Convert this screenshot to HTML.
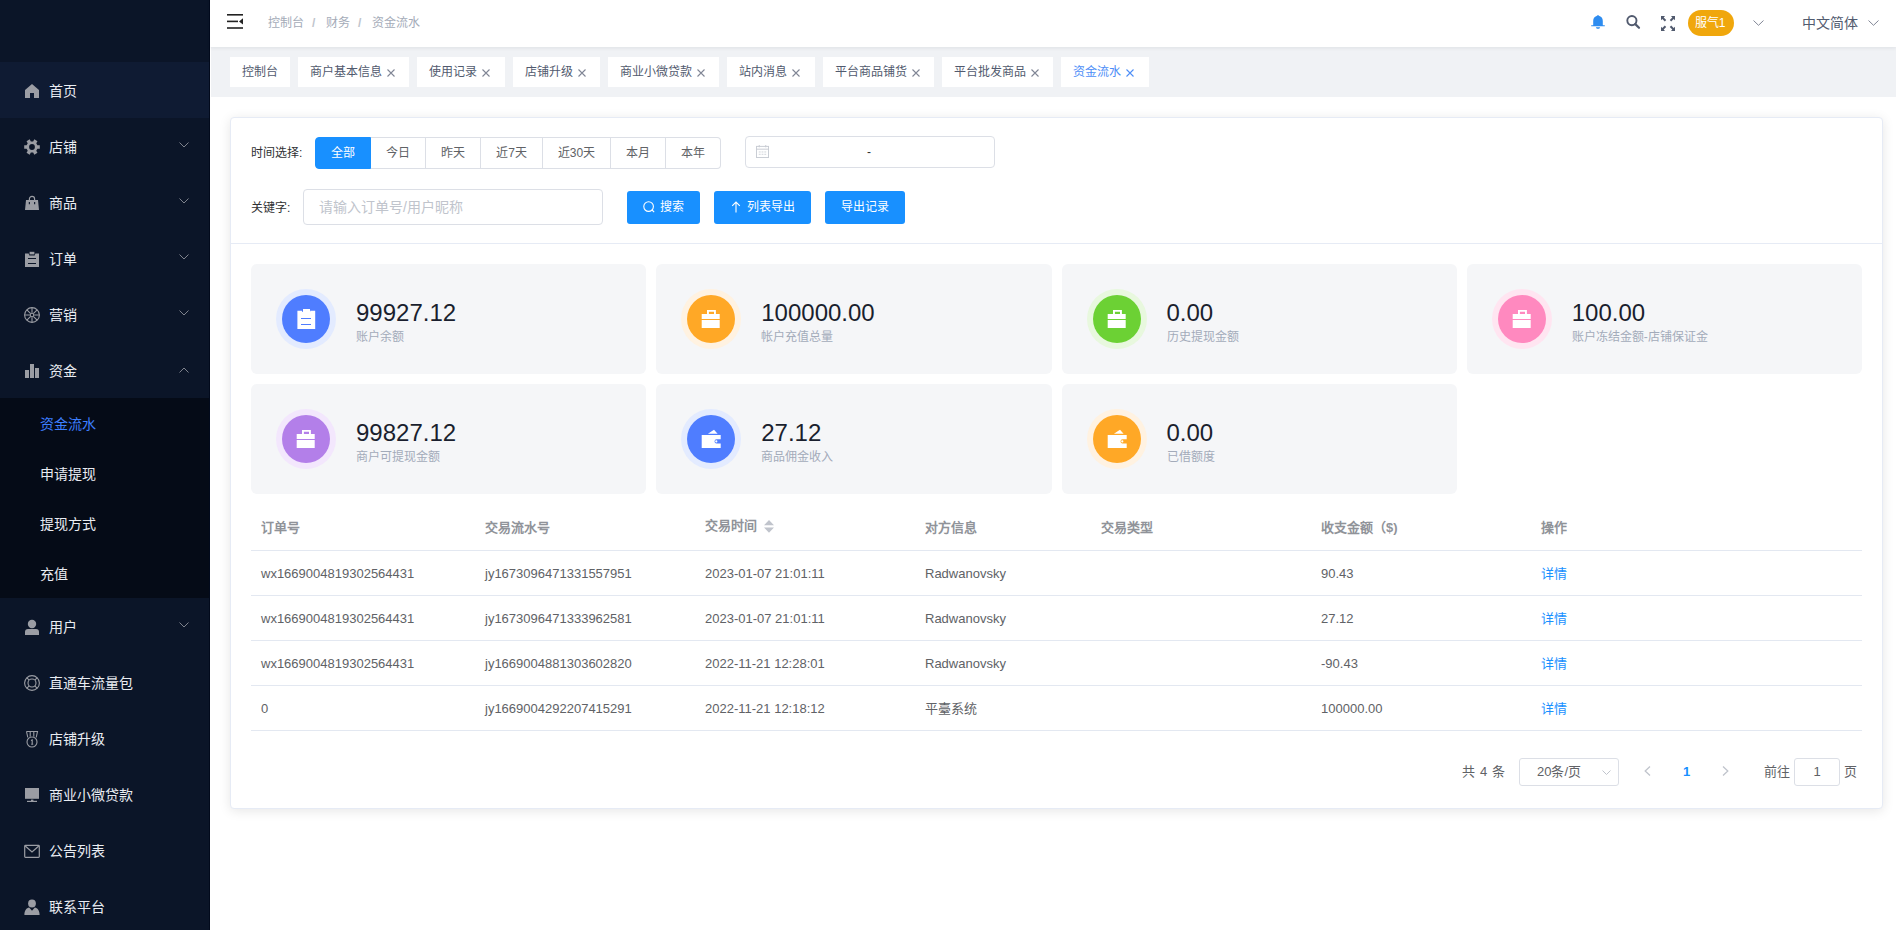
<!DOCTYPE html>
<html lang="zh-CN">
<head>
<meta charset="utf-8">
<title>资金流水</title>
<style>
*{box-sizing:border-box;margin:0;padding:0}
html,body{width:1896px;height:930px;overflow:hidden;background:#fff;font-family:"Liberation Sans",sans-serif;}
.a{position:absolute;white-space:nowrap}
#side{position:absolute;left:0;top:0;width:210px;height:930px;background:#0b1528;border-right:1px solid #020a1c;overflow:hidden}
.mi{position:absolute;left:0;width:209px;height:56px;color:#e9ecf2;font-size:14px;line-height:56px}
.mi .t{position:absolute;left:49px;top:1px}
.mi svg.ic{position:absolute;left:24px;top:18px;width:16px;height:20px;fill:#9b9da4}
.mi svg.ch{position:absolute;left:179px;top:24px;width:10px;height:6px;fill:none;stroke:#7f838d;stroke-width:1}
.hl{background:#0f1b33}
#sub{position:absolute;left:0;top:398px;width:209px;height:200px;background:#050b17}
.si{position:absolute;left:40px;width:160px;height:50px;line-height:52px;font-size:14px;color:#e9ecf2}
#hdr{position:absolute;left:210px;top:0;width:1686px;height:47px;background:#fff;z-index:2;box-shadow:0 1px 4px rgba(0,21,41,.08)}
#tabs{position:absolute;left:211px;top:47px;width:1685px;height:50px;background:#f0f2f5}
.tab{position:absolute;top:10px;height:30px;background:#fff;font-size:12px;line-height:30px;color:#515a6e;white-space:nowrap}
.tab span{position:absolute;left:12px;top:0}
.tab svg{position:absolute;top:12px;width:8px;height:8px;stroke:#808695;stroke-width:1.1;fill:none}

.bc{position:absolute;top:0;height:47px;line-height:47px;font-size:12px;color:#a4abb8}
.bcs{position:absolute;top:0;height:47px;line-height:47px;font-size:12px;color:#c0c4cc;font-weight:bold}
#card{position:absolute;left:230px;top:117px;width:1653px;height:692px;background:#fff;border:1px solid #e6ebf5;border-radius:4px;box-shadow:0 2px 12px 0 rgba(0,0,0,.1)}
.lbl{position:absolute;font-size:12px;color:#303133;line-height:16px}
.rb{position:absolute;top:19px;height:32px;border:1px solid #dcdfe6;border-left:none;font-size:12px;line-height:30px;color:#606266;text-align:center;background:#fff}
.btn{position:absolute;top:73px;height:33px;background:#1890ff;border-radius:3px;color:#fff;font-size:12px;line-height:32px}
.sc{position:absolute;width:395.25px;height:110px;background:#f5f6f8;border-radius:6px}
.ring{position:absolute;left:25px;top:25px;width:60px;height:60px;border-radius:50%}
.dot{position:absolute;left:6px;top:6px;width:48px;height:48px;border-radius:50%}
.dot svg{position:absolute;left:0;top:0;width:48px;height:48px;fill:#fff}
.num{position:absolute;left:105px;top:35px;font-size:24px;line-height:28px;color:#1a1f2e}
.sl{position:absolute;left:105px;top:65px;font-size:12px;line-height:16px;color:#a3abba}
.th{position:absolute;top:388px;height:44px;line-height:44px;font-size:13px;font-weight:bold;color:#909399}
.td{position:absolute;height:44px;line-height:46px;font-size:13px;color:#606266}
.rl{position:absolute;left:251px;width:1611px;height:1px;background:#e3e8f1}
.pg{position:absolute;font-size:13px;color:#606266;line-height:28px;top:640px}
</style>
</head>
<body>
<div id="side">
  <div class="mi hl" style="top:62px"><svg class="ic" viewBox="0 0 16 20"><path d="M8 4 L15 10 V18 H10 V13 H6 V18 H1 V10 Z"/></svg><span class="t">首页</span></div>
  <div class="mi" style="top:118px"><svg class="ic" viewBox="0 0 16 20"><path fill-rule="evenodd" d="M13.41 9.20 L15.79 9.20 L15.79 12.80 L13.41 12.80 L12.26 14.78 L13.46 16.85 L10.34 18.65 L9.15 16.58 L6.85 16.58 L5.66 18.65 L2.54 16.85 L3.74 14.78 L2.59 12.80 L0.21 12.80 L0.21 9.20 L2.59 9.20 L3.74 7.22 L2.54 5.15 L5.66 3.35 L6.85 5.42 L9.15 5.42 L10.34 3.35 L13.46 5.15 L12.26 7.22 Z M10.9 11 A2.9 2.9 0 1 0 5.1 11 A2.9 2.9 0 1 0 10.9 11 Z"/></svg><span class="t">店铺</span><svg class="ch" viewBox="0 0 10 6"><path d="M0.5 0.5 L5 5 L9.5 0.5"/></svg></div>
  <div class="mi" style="top:174px"><svg class="ic" viewBox="0 0 16 20"><path fill-rule="evenodd" d="M2 8 H14 L15 18 H1 Z M4.8 10 V12.2 H5.9 V10 Z M10.1 10 V12.2 H11.2 V10 Z"/><path d="M5.4 8.2 V7 A2.6 2.6 0 0 1 10.6 7 V8.2" fill="none" stroke="#9b9da4" stroke-width="1.2"/></svg><span class="t">商品</span><svg class="ch" viewBox="0 0 10 6"><path d="M0.5 0.5 L5 5 L9.5 0.5"/></svg></div>
  <div class="mi" style="top:230px"><svg class="ic" viewBox="0 0 16 20"><path fill-rule="evenodd" d="M1 5.5 H4.6 L5.4 7.6 H10.6 L11.4 5.5 H15 V19 H1 Z M4 10 V11 H12 V10 Z M4 15 V16 H12 V15 Z"/><rect x="5.6" y="3.8" width="4.8" height="2.6"/></svg><span class="t">订单</span><svg class="ch" viewBox="0 0 10 6"><path d="M0.5 0.5 L5 5 L9.5 0.5"/></svg></div>
  <div class="mi" style="top:286px"><svg class="ic" viewBox="0 0 16 20" style="fill:none;stroke:#9b9da4;stroke-width:1.1"><circle cx="8" cy="11" r="7.4"/><circle cx="8" cy="11" r="1.8"/><path d="M10.20 11.00L15.30 11.00M9.56 12.56L13.16 16.16M8.00 13.20L8.00 18.30M6.44 12.56L2.84 16.16M5.80 11.00L0.70 11.00M6.44 9.44L2.84 5.84M8.00 8.80L8.00 3.70M9.56 9.44L13.16 5.84"/></svg><span class="t">营销</span><svg class="ch" viewBox="0 0 10 6"><path d="M0.5 0.5 L5 5 L9.5 0.5"/></svg></div>
  <div class="mi" style="top:342px"><svg class="ic" viewBox="0 0 16 20"><rect x="1" y="10" width="4" height="8"/><rect x="6" y="4" width="4" height="14"/><rect x="11" y="8" width="4" height="10"/></svg><span class="t">资金</span><svg class="ch" viewBox="0 0 10 6" style="top:25px"><path d="M0.5 5.5 L5 1 L9.5 5.5"/></svg></div>
  <div id="sub">
    <div class="si" style="top:0;color:#3d7fff">资金流水</div>
    <div class="si" style="top:50px">申请提现</div>
    <div class="si" style="top:100px">提现方式</div>
    <div class="si" style="top:150px">充值</div>
  </div>
  <div class="mi" style="top:598px"><svg class="ic" viewBox="0 0 16 20"><circle cx="8" cy="8" r="4.2"/><path d="M1 19 V16 A3 3 0 0 1 4 13 H12 A3 3 0 0 1 15 16 V19 Z"/></svg><span class="t">用户</span><svg class="ch" viewBox="0 0 10 6"><path d="M0.5 0.5 L5 5 L9.5 0.5"/></svg></div>
  <div class="mi" style="top:654px"><svg class="ic" viewBox="0 0 16 20" style="fill:none;stroke:#9b9da4;stroke-width:1.1"><circle cx="8" cy="11" r="7.4"/><circle cx="8" cy="11" r="4"/><path d="M10.83 13.83L13.30 16.30M5.17 13.83L2.70 16.30M5.17 8.17L2.70 5.70M10.83 8.17L13.30 5.70"/></svg><span class="t">直通车流量包</span></div>
  <div class="mi" style="top:710px"><svg class="ic" viewBox="0 0 16 20" style="fill:none;stroke:#9b9da4;stroke-width:1.1"><path d="M2.5 3.5 H13.5 L12.2 9.5 M2.5 3.5 L3.8 9.5 M6.2 4 V8.8 M9.8 4 V8.8"/><circle cx="8" cy="14" r="5"/><path d="M7 12.6 L8.2 12 V16.3 M7.2 16.3 H9.2"/></svg><span class="t">店铺升级</span></div>
  <div class="mi" style="top:766px"><svg class="ic" viewBox="0 0 16 20"><rect x="1" y="4" width="14" height="10.8"/><rect x="7" y="15.6" width="2.4" height="1.4"/><rect x="3" y="16.8" width="10" height="1.2"/></svg><span class="t">商业小微贷款</span></div>
  <div class="mi" style="top:822px"><svg class="ic" viewBox="0 0 16 20" style="fill:none;stroke:#9b9da4;stroke-width:1.2"><rect x="0.7" y="5.4" width="14.6" height="12" rx="0.8"/><path d="M1.2 6 L8 12 L14.8 6"/></svg><span class="t">公告列表</span></div>
  <div class="mi" style="top:878px"><svg class="ic" viewBox="0 0 16 20"><circle cx="8" cy="7.5" r="3.9"/><path d="M0.4 19 C0.4 14.5 2.5 12 5.2 11.6 L8 14.8 L10.8 11.6 C13.5 12 15.6 14.5 15.6 19 Z"/></svg><span class="t">联系平台</span></div>
</div>

<div id="hdr">
  <svg class="a" style="left:17px;top:14px" width="16" height="15" viewBox="0 0 16 15"><rect x="0" y="0" width="16" height="1.6" fill="#222"/><rect x="0" y="6.6" width="11" height="1.6" fill="#222"/><rect x="0" y="13.2" width="16" height="1.6" fill="#222"/><path d="M16 4.2 L12 7.4 L16 10.6 Z" fill="#222"/></svg>
  <span class="bc" style="left:58px">控制台</span>
  <span class="bcs" style="left:102px">/</span>
  <span class="bc" style="left:116px">财务</span>
  <span class="bcs" style="left:148px">/</span>
  <span class="bc" style="left:162px">资金流水</span>
  <svg class="a" style="left:1381px;top:15px" width="14" height="14" viewBox="0 0 14 14"><path d="M7 0 L5.6 0.9 C3.4 1.6 2.2 3.4 2.2 6 V10.2 H0.2 V11.3 H13.8 V10.2 H11.8 V6 C11.8 3.4 10.6 1.6 8.4 0.9 Z M4.8 12.3 H9.2 L8.2 13.8 H5.8 Z" fill="#2d8cf0"/></svg>
  <svg class="a" style="left:1416px;top:15px" width="15" height="15" viewBox="0 0 15 15"><circle cx="5.9" cy="5.6" r="4.6" fill="none" stroke="#515a6e" stroke-width="1.9"/><path d="M9.3 9.1 L13 12.8" stroke="#515a6e" stroke-width="2.2" stroke-linecap="round"/></svg>
  <svg class="a" style="left:1451px;top:16px" width="14" height="15" viewBox="0 0 15 15" preserveAspectRatio="none" fill="#515a6e"><path d="M0 0 H4.3 L2.9 1.4 L5.6 4.1 L4.1 5.6 L1.4 2.9 L0 4.3 Z"/><path d="M15 0 V4.3 L13.6 2.9 L10.9 5.6 L9.4 4.1 L12.1 1.4 L10.7 0 Z"/><path d="M0 15 V10.7 L1.4 12.1 L4.1 9.4 L5.6 10.9 L2.9 13.6 L4.3 15 Z"/><path d="M15 15 H10.7 L12.1 13.6 L9.4 10.9 L10.9 9.4 L13.6 12.1 L15 10.7 Z"/></svg>
  <div class="a" style="left:1478px;top:10px;width:46px;height:26px;border-radius:13px;background:#f0a70c;color:#fff;font-size:12px;line-height:26px;text-indent:-2px;text-align:center">服气1</div>
  <svg class="a" style="left:1543px;top:20px" width="11" height="6" viewBox="0 0 11 6" fill="none" stroke="#808695" stroke-width="1"><path d="M0.5 0.5 L5.5 5.3 L10.5 0.5"/></svg>
  <span class="a" style="left:1592px;top:0;line-height:47px;font-size:14px;color:#515a6e">中文简体</span>
  <svg class="a" style="left:1658px;top:20px" width="11" height="6" viewBox="0 0 11 6" fill="none" stroke="#808695" stroke-width="1"><path d="M0.5 0.5 L5.5 5.3 L10.5 0.5"/></svg>
</div>
<div id="tabs">
  <div class="tab" style="left:19px;width:60px"><span>控制台</span></div>
  <div class="tab" style="left:87px;width:111px"><span>商户基本信息</span><svg style="left:89px" viewBox="0 0 8 8"><path d="M0.5 0.5 L7.5 7.5 M7.5 0.5 L0.5 7.5"/></svg></div>
  <div class="tab" style="left:206px;width:88px"><span>使用记录</span><svg style="left:65px" viewBox="0 0 8 8"><path d="M0.5 0.5 L7.5 7.5 M7.5 0.5 L0.5 7.5"/></svg></div>
  <div class="tab" style="left:302px;width:87px"><span>店铺升级</span><svg style="left:65px" viewBox="0 0 8 8"><path d="M0.5 0.5 L7.5 7.5 M7.5 0.5 L0.5 7.5"/></svg></div>
  <div class="tab" style="left:397px;width:111px"><span>商业小微贷款</span><svg style="left:89px" viewBox="0 0 8 8"><path d="M0.5 0.5 L7.5 7.5 M7.5 0.5 L0.5 7.5"/></svg></div>
  <div class="tab" style="left:516px;width:88px"><span>站内消息</span><svg style="left:65px" viewBox="0 0 8 8"><path d="M0.5 0.5 L7.5 7.5 M7.5 0.5 L0.5 7.5"/></svg></div>
  <div class="tab" style="left:612px;width:111px"><span>平台商品铺货</span><svg style="left:89px" viewBox="0 0 8 8"><path d="M0.5 0.5 L7.5 7.5 M7.5 0.5 L0.5 7.5"/></svg></div>
  <div class="tab" style="left:731px;width:111px"><span>平台批发商品</span><svg style="left:89px" viewBox="0 0 8 8"><path d="M0.5 0.5 L7.5 7.5 M7.5 0.5 L0.5 7.5"/></svg></div>
  <div class="tab" style="left:850px;width:88px;color:#4d8ef7"><span>资金流水</span><svg style="left:65px;stroke:#4d8ef7" viewBox="0 0 8 8"><path d="M0.5 0.5 L7.5 7.5 M7.5 0.5 L0.5 7.5"/></svg></div>
</div>


<div id="card">
  <div class="a" style="left:0;top:125px;width:1651px;height:1px;background:#e6ebf5"></div>
  <span class="lbl" style="left:20px;top:27px">时间选择:</span>
  <div class="rb" style="left:84px;width:56px;border-left:1px solid #1890ff;border-color:#1890ff;background:#1890ff;color:#fff;border-radius:4px 0 0 4px">全部</div>
  <div class="rb" style="left:140px;width:55px">今日</div>
  <div class="rb" style="left:195px;width:55px">昨天</div>
  <div class="rb" style="left:250px;width:62px">近7天</div>
  <div class="rb" style="left:312px;width:68px">近30天</div>
  <div class="rb" style="left:380px;width:55px">本月</div>
  <div class="rb" style="left:435px;width:55px;border-radius:0 4px 4px 0">本年</div>
  <div class="a" style="left:514px;top:18px;width:250px;height:32px;border:1px solid #dcdfe6;border-radius:4px"></div>
  <svg class="a" style="left:525px;top:27px" width="13" height="13" viewBox="0 0 14 14" fill="none" stroke="#c8ccd3" stroke-width="1.05"><rect x="0.5" y="1.5" width="13" height="12"/><path d="M0.5 4.5 H13.5 M3.5 0 V2.5 M10.5 0 V2.5"/><path d="M3 7.5 H5 M6 7.5 H8 M9 7.5 H11 M3 10 H5 M6 10 H8 M9 10 H11" stroke-width="0.9"/></svg>
  <span class="a" style="left:636px;top:26px;font-size:12px;line-height:16px;color:#303133">-</span>
  <span class="lbl" style="left:20px;top:82px">关键字:</span>
  <div class="a" style="left:72px;top:71px;width:300px;height:36px;border:1px solid #dcdfe6;border-radius:4px;font-size:14px;line-height:34px;color:#c0c4cc;padding-left:15px">请输入订单号/用户昵称</div>
  <div class="btn" style="left:396px;width:73px"><svg class="a" style="left:16px;top:10px" width="12" height="12" viewBox="0 0 12 12" fill="none" stroke="#fff" stroke-width="1.1"><circle cx="5.6" cy="5.6" r="4.8"/><path d="M9 9 L11.2 11.2"/></svg><span class="a" style="left:33px;top:0">搜索</span></div>
  <div class="btn" style="left:483px;width:97px"><svg class="a" style="left:16px;top:10px" width="12" height="12" viewBox="0 0 12 12" fill="none" stroke="#fff" stroke-width="1.1"><path d="M6 11.5 V1 M2.2 4.8 L6 1 L9.8 4.8"/></svg><span class="a" style="left:33px;top:0">列表导出</span></div>
  <div class="btn" style="left:594px;width:80px"><span class="a" style="left:16px;top:0">导出记录</span></div>
<div class="sc" style="left:20.00px;top:146px"><div class="ring" style="background:#e3ebff"><div class="dot" style="background:#4f7dff"><svg style="fill:#fff" viewBox="0 0 48 48"><path fill-rule="evenodd" d="M15.4 15.7 H20 V16.8 H28.2 V15.7 H33.2 V34 H15.4 Z M19 23 V23.9 H29 V23 Z M19 29 V29.9 H29 V29 Z"/><rect x="21" y="14" width="7" height="3.2" fill="#fff"/></svg></div></div><div class="num">99927.12</div><div class="sl">账户余额</div></div>
<div class="sc" style="left:425.25px;top:146px"><div class="ring" style="background:#fff2e1"><div class="dot" style="background:#ffa826"><svg style="fill:#fff" viewBox="0 0 48 48"><path fill-rule="evenodd" d="M14.7 19 H20 V15 H28.9 V19 H32.7 V24.1 H14.7 Z M21.9 16.8 V19 H27 V16.8 Z"/><rect x="14.7" y="25" width="18" height="8"/></svg></div></div><div class="num">100000.00</div><div class="sl">帐户充值总量</div></div>
<div class="sc" style="left:830.5px;top:146px"><div class="ring" style="background:#e8f8de"><div class="dot" style="background:#6cd134"><svg style="fill:#fff" viewBox="0 0 48 48"><path fill-rule="evenodd" d="M14.7 19 H20 V15 H28.9 V19 H32.7 V24.1 H14.7 Z M21.9 16.8 V19 H27 V16.8 Z"/><rect x="14.7" y="25" width="18" height="8"/></svg></div></div><div class="num">0.00</div><div class="sl">历史提现金额</div></div>
<div class="sc" style="left:1235.75px;top:146px"><div class="ring" style="background:#ffe5f1"><div class="dot" style="background:#ff89bf"><svg style="fill:#fff" viewBox="0 0 48 48"><path fill-rule="evenodd" d="M14.7 19 H20 V15 H28.9 V19 H32.7 V24.1 H14.7 Z M21.9 16.8 V19 H27 V16.8 Z"/><rect x="14.7" y="25" width="18" height="8"/></svg></div></div><div class="num">100.00</div><div class="sl">账户冻结金额-店铺保证金</div></div>
<div class="sc" style="left:20.00px;top:266px"><div class="ring" style="background:#f3e7fd"><div class="dot" style="background:#b37fe9"><svg style="fill:#fff" viewBox="0 0 48 48"><path fill-rule="evenodd" d="M14.7 19 H20 V15 H28.9 V19 H32.7 V24.1 H14.7 Z M21.9 16.8 V19 H27 V16.8 Z"/><rect x="14.7" y="25" width="18" height="8"/></svg></div></div><div class="num">99827.12</div><div class="sl">商户可提现金额</div></div>
<div class="sc" style="left:425.25px;top:266px"><div class="ring" style="background:#e3ebff"><div class="dot" style="background:#4f7dff"><svg style="fill:#fff" viewBox="0 0 48 48"><path d="M14.7 20 H33.7 V24.3 H29.6 A2.1 2.1 0 0 0 29.6 28.5 H33.7 V33 H14.7 Z"/><circle cx="29.3" cy="26.4" r="1.1"/><path d="M20.9 18.8 L27 14.7 L30.6 18.8 Z"/></svg></div></div><div class="num">27.12</div><div class="sl">商品佣金收入</div></div>
<div class="sc" style="left:830.5px;top:266px"><div class="ring" style="background:#fff2e1"><div class="dot" style="background:#ffa826"><svg style="fill:#fff" viewBox="0 0 48 48"><path d="M14.7 20 H33.7 V24.3 H29.6 A2.1 2.1 0 0 0 29.6 28.5 H33.7 V33 H14.7 Z"/><circle cx="29.3" cy="26.4" r="1.1"/><path d="M20.9 18.8 L27 14.7 L30.6 18.8 Z"/></svg></div></div><div class="num">0.00</div><div class="sl">已借额度</div></div>
<span class="th" style="left:30px">订单号</span><span class="th" style="left:254px">交易流水号</span><span class="th" style="left:474px;top:386px">交易时间</span><span class="th" style="left:694px">对方信息</span><span class="th" style="left:870px">交易类型</span><span class="th" style="left:1090px">收支金额（$)</span><span class="th" style="left:1310px">操作</span><svg class="a" style="left:533px;top:402px" width="10" height="13" viewBox="0 0 10 13"><path d="M0 5.2 L5 0 L10 5.2 Z M0 7.6 L5 12.8 L10 7.6 Z" fill="#c0c4cc"/></svg><div class="rl" style="left:20px;top:432px"></div><span class="td" style="left:30px;top:433px">wx1669004819302564431</span><span class="td" style="left:254px;top:433px">jy1673096471331557951</span><span class="td" style="left:474px;top:433px">2023-01-07 21:01:11</span><span class="td" style="left:694px;top:433px">Radwanovsky</span><span class="td" style="left:1090px;top:433px">90.43</span><span class="td" style="left:1310px;top:433px;color:#1890ff">详情</span><div class="rl" style="left:20px;top:477px"></div><span class="td" style="left:30px;top:478px">wx1669004819302564431</span><span class="td" style="left:254px;top:478px">jy1673096471333962581</span><span class="td" style="left:474px;top:478px">2023-01-07 21:01:11</span><span class="td" style="left:694px;top:478px">Radwanovsky</span><span class="td" style="left:1090px;top:478px">27.12</span><span class="td" style="left:1310px;top:478px;color:#1890ff">详情</span><div class="rl" style="left:20px;top:522px"></div><span class="td" style="left:30px;top:523px">wx1669004819302564431</span><span class="td" style="left:254px;top:523px">jy1669004881303602820</span><span class="td" style="left:474px;top:523px">2022-11-21 12:28:01</span><span class="td" style="left:694px;top:523px">Radwanovsky</span><span class="td" style="left:1090px;top:523px">-90.43</span><span class="td" style="left:1310px;top:523px;color:#1890ff">详情</span><div class="rl" style="left:20px;top:567px"></div><span class="td" style="left:30px;top:568px">0</span><span class="td" style="left:254px;top:568px">jy1669004292207415291</span><span class="td" style="left:474px;top:568px">2022-11-21 12:18:12</span><span class="td" style="left:694px;top:568px">平臺系统</span><span class="td" style="left:1090px;top:568px">100000.00</span><span class="td" style="left:1310px;top:568px;color:#1890ff">详情</span><div class="rl" style="left:20px;top:612px"></div>
  <span class="pg" style="left:1231px;word-spacing:1.5px">共 4 条</span>
  <div class="a" style="left:1288px;top:640px;width:100px;height:28px;border:1px solid #dcdfe6;border-radius:3px;font-size:13px;line-height:26px;color:#606266;padding-left:17px">20条/页</div>
  <svg class="a" style="left:1371px;top:652px" width="9" height="5" viewBox="0 0 9 5" fill="none" stroke="#c0c4cc" stroke-width="1"><path d="M0.5 0.5 L4.5 4.5 L8.5 0.5"/></svg>
  <svg class="a" style="left:1413px;top:648px" width="7" height="10" viewBox="0 0 7 10" fill="none" stroke="#c0c4cc" stroke-width="1.3"><path d="M6 0.5 L1.2 5 L6 9.5"/></svg>
  <span class="pg" style="left:1452px;top:640px;color:#1890ff;font-weight:bold">1</span>
  <svg class="a" style="left:1491px;top:648px" width="7" height="10" viewBox="0 0 7 10" fill="none" stroke="#c0c4cc" stroke-width="1.3"><path d="M1 0.5 L5.8 5 L1 9.5"/></svg>
  <span class="pg" style="left:1533px;top:640px">前往</span>
  <div class="a" style="left:1563px;top:640px;width:46px;height:28px;border:1px solid #dcdfe6;border-radius:3px;font-size:13px;line-height:26px;color:#606266;text-align:center">1</div>
  <span class="pg" style="left:1613px;top:640px">页</span>
</div>

</body>
</html>
